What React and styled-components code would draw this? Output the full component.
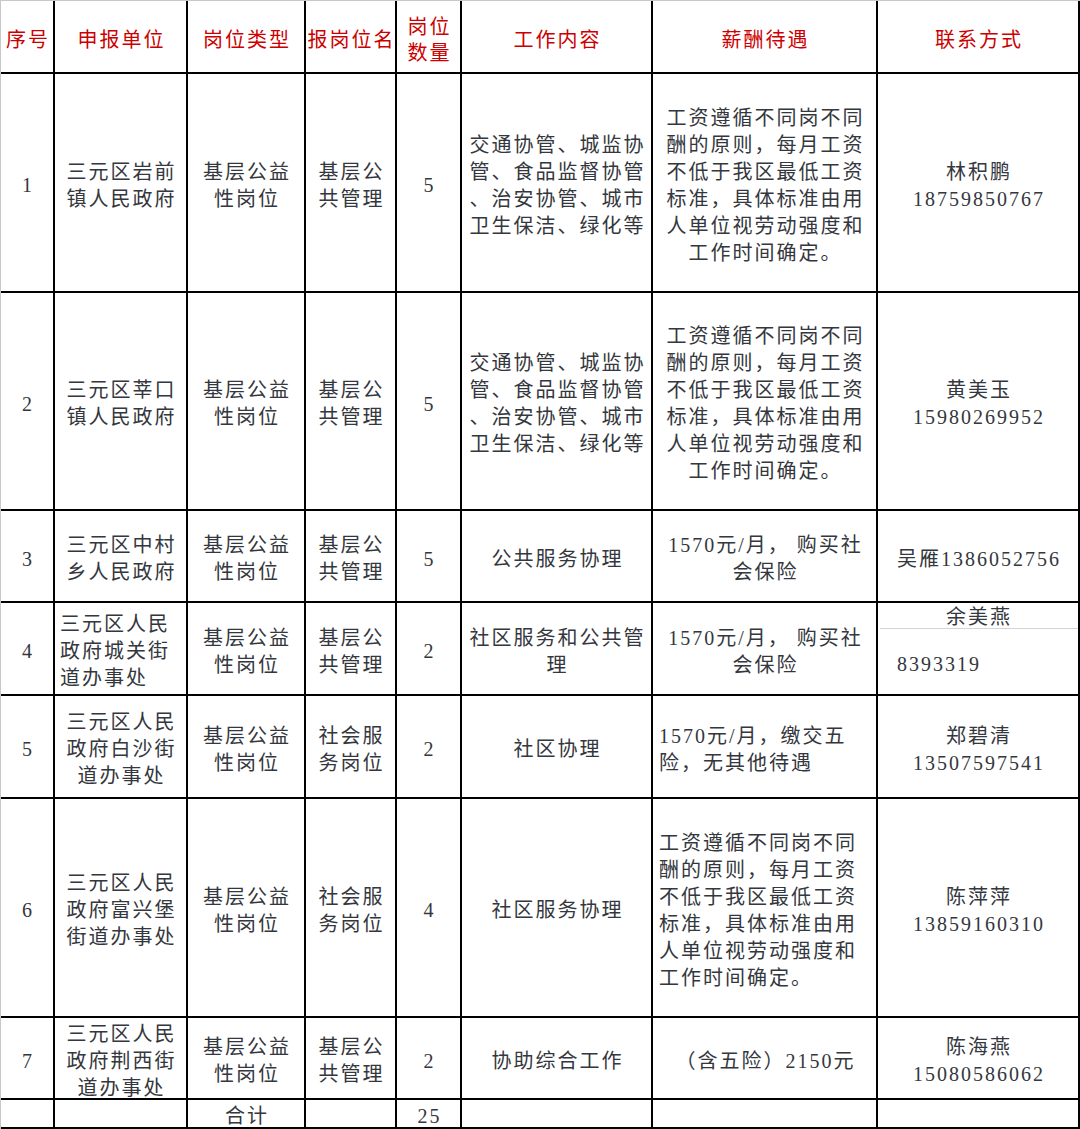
import React from "react";
import styled, { createGlobalStyle } from "styled-components";

const Global = createGlobalStyle`
  html, body { margin: 0; padding: 0; background: #fff; }
  body { width: 1080px; height: 1129px; overflow: hidden; }
`;

const Table = styled.div`
  display: grid;
  grid-template-columns: 52px 131px 116px 89px 63px 189px 223px 200px;
  grid-template-rows: 71px 217px 216px 90px 91px 101px 217px 80px 27px;
  gap: 2px;
  background: #000;
  border-top: 1px solid #c8c8c8;
  border-left: 1px solid #c8c8c8;
  padding: 0 2px 2px 0;
  font-family: "Liberation Serif", "Noto Sans CJK SC", serif;
  font-size: 20px;
  line-height: 27px;
  letter-spacing: 2px;
  color: #34373d;
`;

const Cell = styled.div`
  background: #fff;
  display: flex;
  align-items: center;
  justify-content: ${(p) => (p.$align === "left" ? "flex-start" : "center")};
  text-align: ${(p) => (p.$align === "left" ? "left" : "center")};
  padding: 6px 0 0 ${(p) => (p.$align === "left" ? p.$pad || 6 : 2)}px;
  white-space: pre;
`;

const HeadCell = styled(Cell)`
  color: #cc0000;
  line-height: 26px;
  padding-top: 7px;
`;

const TotalCell = styled(Cell)`
  align-items: flex-start;
  padding-top: 3px;
  overflow: hidden;
`;

const SplitCell = styled.div`
  background: #fff;
  display: flex;
  flex-direction: column;
  overflow: hidden;
`;

const SplitTop = styled.div`
  height: 26px;
  padding-top: 4px;
  box-sizing: border-box;
  display: flex;
  align-items: center;
  justify-content: center;
  border-bottom: 1px solid #d4d4d4;
  margin-left: 2px;
  white-space: pre;
`;

const SplitBottom = styled.div`
  flex: 1;
  display: flex;
  align-items: center;
  padding: 5px 0 0 19px;
  white-space: pre;
`;

const PAY =
  "工资遵循不同岗不同\n酬的原则，每月工资\n不低于我区最低工资\n标准，具体标准由用\n人单位视劳动强度和\n工作时间确定。";
const WORK = "交通协管、城监协\n管、食品监督协管\n、治安协管、城市\n卫生保洁、绿化等";

const headers = ["序号", "申报单位", "岗位类型", "报岗位名", "岗位\n数量", "工作内容", "薪酬待遇", "联系方式"];

const rows = [
  { no: "1", unit: "三元区岩前\n镇人民政府", type: "基层公益\n性岗位", name: "基层公\n共管理", count: "5", work: WORK, pay: PAY, contact: "林积鹏\n18759850767" },
  { no: "2", unit: "三元区莘口\n镇人民政府", type: "基层公益\n性岗位", name: "基层公\n共管理", count: "5", work: WORK, pay: PAY, contact: "黄美玉\n15980269952" },
  { no: "3", unit: "三元区中村\n乡人民政府", type: "基层公益\n性岗位", name: "基层公\n共管理", count: "5", work: "公共服务协理", pay: "1570元/月， 购买社\n会保险", contact: "吴雁1386052756" },
  { no: "4", unit: "三元区人民\n政府城关街\n道办事处", unitAlign: "left", type: "基层公益\n性岗位", name: "基层公\n共管理", count: "2", work: "社区服务和公共管\n理", pay: "1570元/月， 购买社\n会保险", split: ["余美燕", "8393319"] },
  { no: "5", unit: "三元区人民\n政府白沙街\n道办事处", type: "基层公益\n性岗位", name: "社会服\n务岗位", count: "2", work: "社区协理", pay: "1570元/月，缴交五\n险，无其他待遇", payAlign: "left", contact: "郑碧清\n13507597541" },
  { no: "6", unit: "三元区人民\n政府富兴堡\n街道办事处", type: "基层公益\n性岗位", name: "社会服\n务岗位", count: "4", work: "社区服务协理", pay: PAY, payAlign: "left", contact: "陈萍萍\n13859160310" },
  { no: "7", unit: "三元区人民\n政府荆西街\n道办事处", type: "基层公益\n性岗位", name: "基层公\n共管理", count: "2", work: "协助综合工作", pay: "（含五险）2150元", contact: "陈海燕\n15080586062" },
];

export default function App() {
  return (
    <>
      <Global />
      <Table>
        {headers.map((h) => (
          <HeadCell key={h}>{h}</HeadCell>
        ))}
        {rows.map((r) => (
          <React.Fragment key={r.no}>
            <Cell>{r.no}</Cell>
            <Cell $align={r.unitAlign} $pad={5}>{r.unit}</Cell>
            <Cell>{r.type}</Cell>
            <Cell>{r.name}</Cell>
            <Cell>{r.count}</Cell>
            <Cell>{r.work}</Cell>
            <Cell $align={r.payAlign} $pad={6}>{r.pay}</Cell>
            {r.split ? (
              <SplitCell>
                <SplitTop>{r.split[0]}</SplitTop>
                <SplitBottom>{r.split[1]}</SplitBottom>
              </SplitCell>
            ) : (
              <Cell>{r.contact}</Cell>
            )}
          </React.Fragment>
        ))}
        <TotalCell />
        <TotalCell />
        <TotalCell>合计</TotalCell>
        <TotalCell />
        <TotalCell>25</TotalCell>
        <TotalCell />
        <TotalCell />
        <TotalCell />
      </Table>
    </>
  );
}
